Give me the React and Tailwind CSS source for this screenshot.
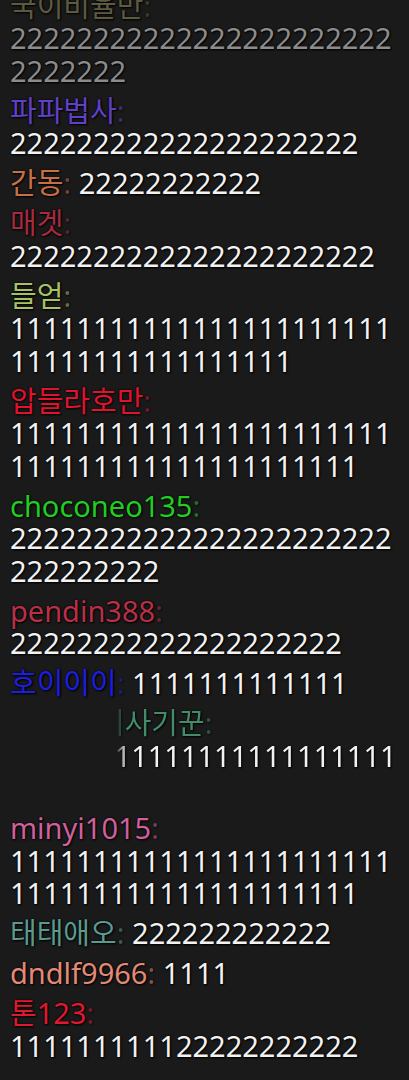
import React from 'react';

const messages = [
  { name: '국이비율만', color: 'text-[#5c5a40]', text: '2'.repeat(30), faded: true },
  { name: '파파법사', color: 'text-[#6040c8]', text: '2'.repeat(21) },
  { name: '간동', color: 'text-[#c87045]', text: '2'.repeat(11) },
  { name: '매겟', color: 'text-[#a82a40]', text: '2'.repeat(22) },
  { name: '들얻', color: 'text-[#a6c262]', text: '1'.repeat(40) },
  { name: '압들라호만', color: 'text-[#e0122e]', text: '1'.repeat(44) },
  { name: 'choconeo135', color: 'text-[#22cc22]', text: '2'.repeat(32) },
  { name: 'pendin388', color: 'text-[#b83048]', text: '2'.repeat(20) },
  { name: '호이이이', color: 'text-[#1e1ee0]', text: '1'.repeat(13) },
  { name: '이사기꾼', color: 'text-[#428c6a]', text: '1'.repeat(18), sliding: true },
  { spacer: true },
  { name: 'minyi1015', color: 'text-[#d0609c]', text: '1'.repeat(44) },
  { name: '태태애오', color: 'text-[#5a9a90]', text: '2'.repeat(12) },
  { name: 'dndlf9966', color: 'text-[#e38a76]', text: '1111' },
  { name: '톤123', color: 'text-[#e01830]', text: '1111111111' + '2'.repeat(11) },
];

const ChatLine = ({ msg }) => {
  if (msg.spacer) return <div className="h-[25px] shrink-0" />;

  const line = (
    <p
      className={`shrink-0 break-words leading-[32.5px] ${
        msg.faded ? 'text-[#8c8c8c]' : 'text-[#f2f2f2]'
      }`}
    >
      <span className={msg.color}>
        {msg.name}
        <span className="opacity-50">:</span>
      </span>{' '}
      {msg.text}
    </p>
  );

  // message still sliding in: left edge fades out
  if (msg.sliding) {
    return (
      <div className="ml-[88px] shrink-0 overflow-hidden [mask-image:linear-gradient(to_right,transparent_17px,black_29px)]">
        {line}
      </div>
    );
  }
  return line;
};

export default function App() {
  return (
    <div className="flex h-[1080px] w-[409px] flex-col justify-end gap-[7.5px] overflow-hidden bg-[#1a1a1a] pb-[18px] pl-[10px] pr-2 font-['Noto_Sans','Noto_Sans_CJK_KR',sans-serif] text-[29px] [text-shadow:1px_1px_2px_#000,0_0_2px_#000]">
      {messages.map((msg, i) => (
        <ChatLine key={i} msg={msg} />
      ))}
    </div>
  );
}
